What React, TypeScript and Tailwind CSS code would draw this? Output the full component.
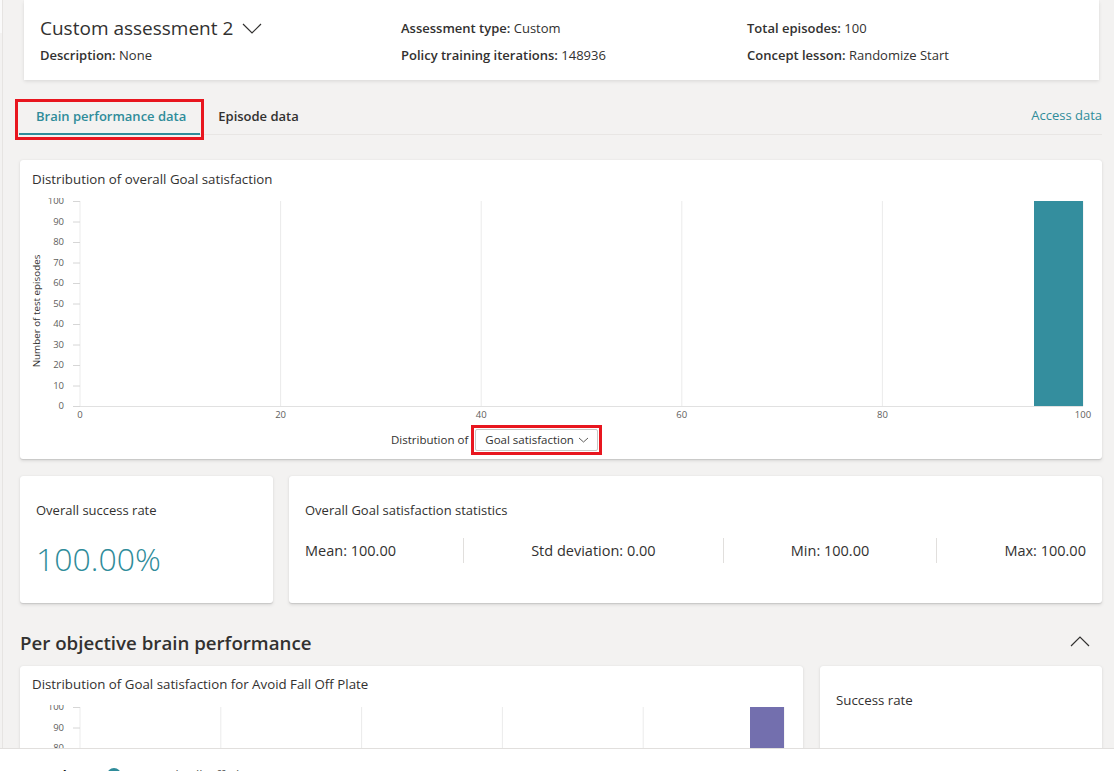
import React from "react";

const TEAL = "#2f8c9a";

function Chevron({ up = false, w = 18, h = 10, color = "#323130", sw = 1.3 }: { up?: boolean; w?: number; h?: number; color?: string; sw?: number }) {
  const pts = up ? `1,${h - 1} ${w / 2},1 ${w - 1},${h - 1}` : `1,1 ${w / 2},${h - 1} ${w - 1},1`;
  return (
    <svg width={w} height={h} viewBox={`0 0 ${w} ${h}`} className="shrink-0">
      <polyline points={pts} fill="none" stroke={color} strokeWidth={sw} />
    </svg>
  );
}

type HistProps = {
  width: number;
  height: number;
  plotLeft: number;
  plotRight: number;
  plotTop: number;
  plotBottom: number;
  segments: number;
  xLabels: string[];
  bar: [number, number];
  barColor: string;
  yTitleX: number;
  yTitleY: number;
};

function Histogram(p: HistProps) {
  const ys = [0, 10, 20, 30, 40, 50, 60, 70, 80, 90, 100];
  const yOf = (v: number) => p.plotTop + (1 - v / 100) * (p.plotBottom - p.plotTop);
  const step = (p.plotRight - p.plotLeft) / p.segments;
  const grid = Array.from({ length: p.segments + 1 }, (_, i) => p.plotLeft + i * step);
  return (
    <svg width={p.width} height={p.height} className="block" style={{ fontFamily: "'Open Sans', sans-serif" }}>
      {grid.map((x, i) => (
        <line key={i} x1={x} x2={x} y1={p.plotTop} y2={p.plotBottom} stroke="#ebebeb" strokeWidth={1} />
      ))}
      <line x1={p.plotLeft} x2={p.plotRight} y1={p.plotBottom + 0.5} y2={p.plotBottom + 0.5} stroke="#e1e1e1" />
      {ys.map((v) => (
        <g key={v}>
          <line x1={p.plotLeft - 7} x2={p.plotLeft} y1={yOf(v) + 0.5} y2={yOf(v) + 0.5} stroke="#d6d6d6" />
          <text x={p.plotLeft - 16} y={yOf(v)} dy="0.35em" textAnchor="end" fontSize={9.5} fill="#605e5c">
            {v}
          </text>
        </g>
      ))}
      {p.xLabels.map((l, i) => (
        <text key={l} x={grid[i]} y={p.plotBottom + 9} dy="0.35em" textAnchor="middle" fontSize={9.5} fill="#605e5c">
          {l}
        </text>
      ))}
      <rect x={p.bar[0]} y={p.plotTop} width={p.bar[1] - p.bar[0]} height={p.plotBottom - p.plotTop} fill={p.barColor} />
      <text
        x={p.yTitleX}
        y={p.yTitleY}
        fontSize={9.8}
        fill="#323130"
        textAnchor="middle"
        transform={`rotate(-90 ${p.yTitleX} ${p.yTitleY})`}
        dy="0.35em"
      >
        Number of test episodes
      </text>
    </svg>
  );
}

function Field({ label, value }: { label: string; value: string }) {
  return (
    <div className="text-[13px] leading-[20px] text-[#323130]">
      <span className="font-semibold">{label}</span> {value}
    </div>
  );
}

const cardShadow = "shadow-[0_0.3px_0.9px_rgba(0,0,0,0.1),0_1.6px_3.6px_rgba(0,0,0,0.1)]";

export default function App() {
  return (
    <div className="flex h-[771px] overflow-hidden bg-[#f3f2f1] font-['Open_Sans',sans-serif] text-[#323130]">
      <div className="flex w-[3px] shrink-0 flex-col border-r border-[#e6e4e2]">
        <div className="h-[33px] bg-[#fafafa]" />
      </div>

      <div className="flex-1 pl-[17px] pr-[12px]">
        {/* header */}
        <div className={`ml-[4px] mr-[3px] grid h-[80px] grid-cols-[361px_346px_1fr] bg-white pl-4 pt-[14px] ${cardShadow}`}>
          <div>
            <div className="flex h-[28px] items-center gap-[9px]">
              <span className="text-[19px] leading-[28px]">Custom assessment 2</span>
              <Chevron w={20} h={11} sw={1.2} />
            </div>
            <div className="mt-[3px]">
              <Field label="Description:" value="None" />
            </div>
          </div>
          <div>
            <div className="flex h-[28px] items-center">
              <Field label="Assessment type:" value="Custom" />
            </div>
            <div className="mt-[3px]">
              <Field label="Policy training iterations:" value="148936" />
            </div>
          </div>
          <div>
            <div className="flex h-[28px] items-center">
              <Field label="Total episodes:" value="100" />
            </div>
            <div className="mt-[3px]">
              <Field label="Concept lesson:" value="Randomize Start" />
            </div>
          </div>
        </div>

        {/* tabs */}
        <div className="mt-[19px] flex h-[36px] items-stretch border-b border-[#e8e6e4]">
          <div className="relative -ml-px flex items-center pl-[17px] pr-[14px] text-[13px] font-semibold" style={{ color: TEAL }}>
            Brain performance data
            <div className="absolute bottom-[-1px] left-0 right-0 h-[2px]" style={{ background: TEAL }} />
            <div className="pointer-events-none absolute bottom-[-6px] left-[-4px] right-[-4px] top-0 border-[3px] border-[#e8161f]" />
          </div>
          <div className="flex items-center pl-[18px] text-[13px] font-semibold text-[#323130]">Episode data</div>
          <div className="ml-auto flex items-center pb-[2px] text-[13px]" style={{ color: TEAL }}>
            Access data
          </div>
        </div>

        {/* main chart */}
        <div className={`mt-[25px] h-[299px] rounded-[3px] bg-white ${cardShadow}`}>
          <div className="pl-3 pt-[9px] text-[13.3px] leading-[20px]">Distribution of overall Goal satisfaction</div>
          <div className="mt-[9px]">
            <Histogram
              width={1082}
              height={227}
              plotLeft={60}
              plotRight={1063}
              plotTop={3}
              plotBottom={208}
              segments={5}
              xLabels={["0", "20", "40", "60", "80", "100"]}
              bar={[1014, 1063]}
              barColor="#348e9e"
              yTitleX={17}
              yTitleY={113}
            />
          </div>
          <div className="flex items-center pl-[371px]">
            <span className="text-[11.5px] text-[#323130]">Distribution of</span>
            <div className="ml-[3px] border-[3px] border-[#e8161f] p-[1px]">
              <div className="flex h-[22px] w-[123px] items-center justify-between rounded-[2px] border border-[#c8c6c4] pl-[9px] pr-[8px] text-[11.5px]">
                Goal satisfaction
                <Chevron w={11} h={6} sw={1} color="#605e5c" />
              </div>
            </div>
          </div>
        </div>

        {/* stats */}
        <div className="mt-[17px] flex gap-4">
          <div className={`h-[127px] w-[253px] shrink-0 rounded-[3px] bg-white pl-4 pt-[25px] ${cardShadow}`}>
            <div className="text-[13px] leading-[18px]">Overall success rate</div>
            <div className="mt-[18px] text-[32px] font-light leading-[44px]" style={{ color: TEAL }}>
              100.00%
            </div>
          </div>
          <div className={`h-[127px] flex-1 rounded-[3px] bg-white px-4 pt-[25px] ${cardShadow}`}>
            <div className="text-[13px] leading-[18px]">Overall Goal satisfaction statistics</div>
            <div className="mt-[19px] flex items-center justify-between text-[14.5px] leading-[25px]">
              <span>Mean: 100.00</span>
              <span className="h-[25px] w-px bg-[#e1dfdd]" />
              <span>Std deviation: 0.00</span>
              <span className="h-[25px] w-px bg-[#e1dfdd]" />
              <span>Min: 100.00</span>
              <span className="h-[25px] w-px bg-[#e1dfdd]" />
              <span>Max: 100.00</span>
            </div>
          </div>
        </div>

        {/* per objective */}
        <div className="mt-[26px] flex h-[28px] items-center justify-between">
          <h2 className="text-[18.7px] font-semibold leading-[28px]">Per objective brain performance</h2>
          <div className="mr-[12px] pb-[3px]">
            <Chevron up w={20} h={11} sw={1.2} />
          </div>
        </div>

        <div className="mt-[9px] flex gap-[17px]">
          <div className={`h-[300px] w-[783px] shrink-0 rounded-[3px] bg-white ${cardShadow}`}>
            <div className="pl-3 pt-[8px] text-[13.3px] leading-[20px]">Distribution of Goal satisfaction for Avoid Fall Off Plate</div>
            <div className="mt-[11px]">
              <Histogram
                width={783}
                height={230}
                plotLeft={60}
                plotRight={764}
                plotTop={2}
                plotBottom={207}
                segments={5}
                xLabels={["0", "20", "40", "60", "80", "100"]}
                bar={[730, 764]}
                barColor="#736fae"
                yTitleX={17}
                yTitleY={112}
              />
            </div>
          </div>
          <div className={`h-[300px] flex-1 rounded-[3px] bg-white pl-4 pt-[24px] ${cardShadow}`}>
            <div className="text-[13.3px] leading-[20px]">Success rate</div>
          </div>
        </div>
      </div>

      {/* footer legend bar */}
      <div className="fixed bottom-0 left-0 right-0 h-[23px] overflow-hidden border-t border-[#e1dfdd] bg-white">
        <div className="flex items-center pl-[20px] pt-[18px] text-[13px] leading-[16px]">
          <span className="font-bold text-[#201f1e]">Legend</span>
          <span className="ml-[40px] h-[14px] w-[14px] rounded-full" style={{ background: TEAL }} />
          <span className="ml-[24px] text-[#605e5c]">Avoid Fall Off Plate</span>
        </div>
      </div>
    </div>
  );
}
